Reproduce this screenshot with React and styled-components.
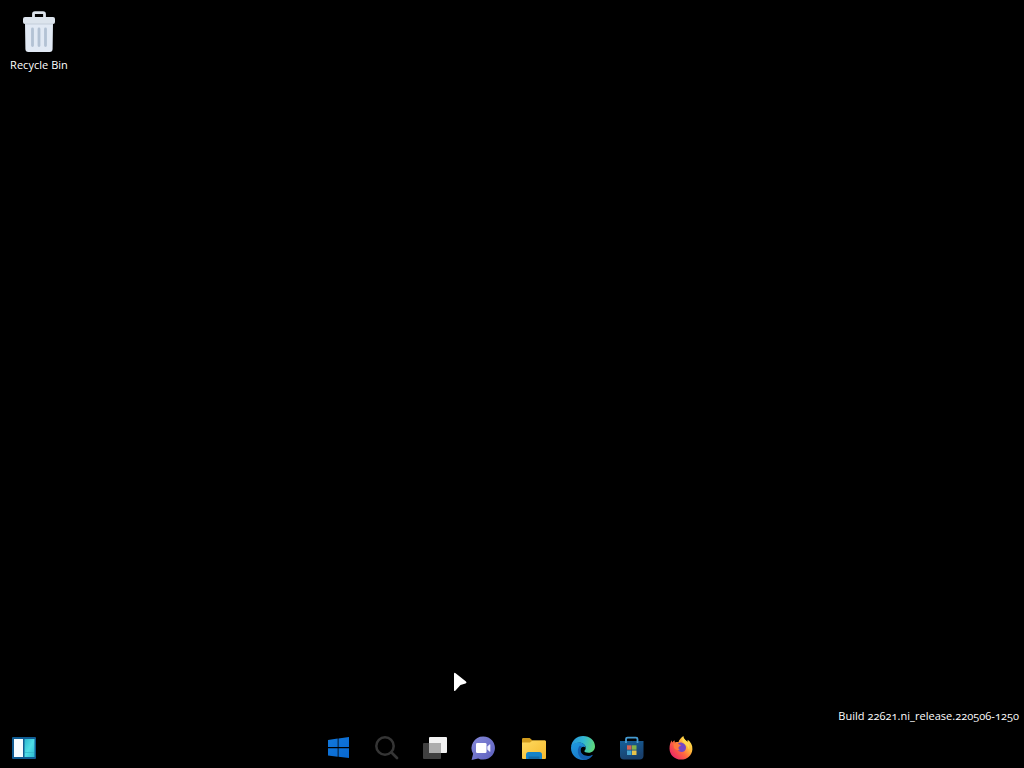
import React from "react";
import styled, { createGlobalStyle } from "styled-components";

const GlobalStyle = createGlobalStyle`
  body {
    margin: 0;
    background: #000;
    overflow: hidden;
  }
`;

const Desktop = styled.div`
  position: relative;
  display: flex;
  flex-direction: column;
  width: 100%;
  height: 100vh;
  background: #000;
  color: #fff;
  font-family: "Open Sans", "Noto Sans", sans-serif;
  font-size: 11px;
  cursor: default;

  svg {
    display: block;
    flex-shrink: 0;
  }
`;

const IconGrid = styled.main`
  flex: 1;
  display: flex;
  flex-direction: column;
  align-items: flex-start;
  padding: 10px 0 0 2px;
`;

const Shortcut = styled.div`
  display: flex;
  flex-direction: column;
  align-items: center;
  gap: 4px;
  width: 74px;
`;

const Label = styled.span`
  line-height: 16px;
  letter-spacing: ${(props) => props.$spacing || "0.03px"};
  white-space: nowrap;
`;

const BuildInfo = styled.div`
  display: flex;
  justify-content: flex-end;
  padding: 0 5px 4px 0;
  font-variant-numeric: oldstyle-nums;
`;

const Taskbar = styled.footer`
  display: flex;
  align-items: center;
  height: 40px;
  padding-left: 12px;
  box-sizing: border-box;
`;

const IconGroup = styled.div`
  display: flex;
  align-items: center;
  gap: ${(props) => props.$gap}px;
  margin-left: ${(props) => props.$offset || 0}px;
`;

const Pointer = styled.div`
  position: absolute;
  left: 452px;
  top: 671px;
`;

const Icon = ({ children }) => (
  <svg width="24" height="24" viewBox="0 0 24 24">{children}</svg>
);

const RecycleBin = () => (
  <svg width="34" height="43" viewBox="0 0 34 43">
    <path d="M11.500 8V4Q11.500 2.700 13 2.700h8Q22.500 2.700 22.500 4V8" fill="none" stroke="#dce3eb" strokeWidth="2.800" />
    <path d="M3 13h28l-.4 26q0 3-3 3H6.400q-3 0-3-3z" fill="#e1e9f4" />
    <rect x="1" y="7" width="32" height="7" rx="2" fill="#dce4ed" />
    <path d="M3 14h28" stroke="#c4ced9" strokeWidth="1" />
    <path d="M10.500 19v16.500M17 19v16.500M23.500 19v16.500" stroke="#b3c2d4" strokeWidth="2.800" strokeLinecap="round" />
  </svg>
);

const WidgetsIcon = () => (
  <Icon>
    <defs>
      <linearGradient id="widgetCyan" x1="0" y1="0" x2="1" y2="1">
        <stop offset="0" stopColor="#29b7d0" />
        <stop offset="0.5" stopColor="#4edde6" />
        <stop offset="1" stopColor="#2cbcd2" />
      </linearGradient>
    </defs>
    <rect x="0" y="1" width="24" height="22" rx="1" fill="#105c93" />
    <rect x="2" y="3" width="9" height="18" fill="#f5fcff" />
    <rect x="12.500" y="3" width="10" height="18" fill="url(#widgetCyan)" />
    <path d="M13 16.500h9" stroke="#35b9cc" strokeWidth="0.800" />
  </Icon>
);

const StartIcon = () => (
  <Icon>
    <defs>
      <linearGradient id="startBlue" x1="0" y1="0" x2="1" y2="1">
        <stop offset="0" stopColor="#1278db" />
        <stop offset="1" stopColor="#0868d2" />
      </linearGradient>
    </defs>
    <path d="M1 4l9.700-1.400v8.500H1zM11.500 2.400L22 1v10.100H11.500zM1 12.200h9.700v8.500L1 19.400zM11.500 12.200H22V22l-10.500-1.300z" fill="url(#startBlue)" />
  </Icon>
);

const SearchIcon = () => (
  <Icon>
    <circle cx="10" cy="10" r="8.700" fill="none" stroke="#353535" strokeWidth="2.500" />
    <path d="M16.500 16.500l5.500 5.500" stroke="#353535" strokeWidth="2.700" strokeLinecap="round" />
  </Icon>
);

const TaskViewIcon = () => (
  <Icon>
    <rect x="0" y="7" width="18" height="16" rx="1" fill="#404040" />
    <rect x="6" y="1" width="18" height="16" rx="1" fill="#f2f2f2" />
    <path d="M6 7h12v10H6z" fill="#adadad" />
  </Icon>
);

const ChatIcon = () => (
  <Icon>
    <defs>
      <linearGradient id="chatPurple" x1="0" y1="0" x2="1" y2="1">
        <stop offset="0" stopColor="#8589d8" />
        <stop offset="1" stopColor="#5c5fbe" />
      </linearGradient>
    </defs>
    <path d="M12.300.4a11.600 11.600 0 1 1-5.100 22L.6 24l1.500-6.200A11.600 11.600 0 0 1 12.300.4z" fill="url(#chatPurple)" />
    <rect x="5" y="7" width="10.500" height="10" rx="1.300" fill="#fff" />
    <path d="M16.300 10.500l2.200-2q.8-.6.8.4v6.300q0 1-.8.4l-2.200-2z" fill="#f0f0ff" />
  </Icon>
);

const FolderIcon = () => (
  <Icon>
    <defs>
      <linearGradient id="folderYellow" x1="0" y1="0" x2="1" y2="1">
        <stop offset="0" stopColor="#ffda60" />
        <stop offset="1" stopColor="#f5b92d" />
      </linearGradient>
    </defs>
    <path d="M0 3.200Q0 2 1.200 2h6.500L10.500 4.500H23v6H0z" fill="#d19b1d" />
    <path d="M0 6.500h8l2.500-2H23q1 0 1 1V22q0 1-1 1H1q-1 0-1-1z" fill="url(#folderYellow)" />
    <path d="M4 23v-4.300Q4 16 6.700 16h10.600q2.700 0 2.700 2.700V23z" fill="#1482c8" />
    <path d="M6.500 20.500h11V23h-11z" fill="#1268a5" />
  </Icon>
);

const EdgeIcon = () => (
  <Icon>
    <defs>
      <linearGradient id="edgeTop" x1="0" y1="0.3" x2="1" y2="0.5">
        <stop offset="0" stopColor="#2796dc" />
        <stop offset="0.5" stopColor="#32b8d2" />
        <stop offset="1" stopColor="#5fd87a" />
      </linearGradient>
      <linearGradient id="edgeBody" x1="0" y1="0" x2="0.7" y2="1">
        <stop offset="0" stopColor="#1f9be0" />
        <stop offset="1" stopColor="#1873c5" />
      </linearGradient>
    </defs>
    <path d="M0 11C.7 4.600 5.600 0 12 0c6.900 0 12 4.600 12 10.300 0 3.900-2.800 6.500-6.500 6.500-2.700 0-4.300-.9-4.300-1.700 0-.7 1.500-1 1.500-3.200 0-3.200-2.900-5.200-6.500-5.200C4.500 6.700 1.500 8.400 0 11z" fill="url(#edgeTop)" />
    <path d="M0 12c0-3.500 3.800-5.600 7.700-5.600 4 0 6.800 2 6.800 5.400-1.200-1.700-5.200-1.300-5.200 2.600 0 4.400 5.400 7.300 10 5.600l2.500-1.100C19.600 22 16.100 24 12 24 5.400 24 0 18.700 0 12z" fill="url(#edgeBody)" />
    <path d="M8.700 9.800c-4.100 5.400-.9 12.300 4.600 14.100 3.700-.2 6.700-2.200 8.700-5.200-4.600 2.500-11.200 1.100-12.300-3.400-.4-1.900.2-3.700 1.400-4.600z" fill="#145fae" />
  </Icon>
);

const StoreIcon = () => (
  <Icon>
    <defs>
      <linearGradient id="storeBag" x1="0" y1="0" x2="0.4" y2="1">
        <stop offset="0" stopColor="#16609a" />
        <stop offset="1" stopColor="#193f6b" />
      </linearGradient>
    </defs>
    <path d="M0 5h23.500v14.500q0 4-4 4H4q-4 0-4-4z" fill="url(#storeBag)" />
    <path d="M6 7V3Q6 1.700 7.500 1.700h8.500q1.500 0 1.500 1.300v4" fill="none" stroke="#459bd2" strokeWidth="1.800" />
    <path d="M7 9.300h4.500v4.400H7z" fill="#d66455" />
    <path d="M12 9.300h4.500v4.400H12z" fill="#83b348" />
    <path d="M7 14.500h4.500V19H7z" fill="#46a3cf" />
    <path d="M12 14.500h4.500V19H12z" fill="#e8c34a" />
  </Icon>
);

const FirefoxIcon = () => (
  <Icon>
    <defs>
      <linearGradient id="firefoxFlame" x1="0.9" y1="0.15" x2="0.15" y2="0.85">
        <stop offset="0" stopColor="#ffe650" />
        <stop offset="0.32" stopColor="#ffb53a" />
        <stop offset="0.6" stopColor="#ff673f" />
        <stop offset="1" stopColor="#ed2b64" />
      </linearGradient>
    </defs>
    <path d="M2.700 4.200l.4 2.300 2.300-2.300.5 2.400c1.200-.5 2.300-.6 3.500-.4C10.300 3.500 12.200 1.500 14.300 0c-.2 2.800 2.500 4 4.200 6.100l.2-2.300c2.900 2.200 5 5.400 4.700 9.400C23 19.300 18.200 23.600 12 23.600S.6 18.800.5 12.700C.5 9.300 1.300 6.600 2.700 4.200z" fill="url(#firefoxFlame)" />
    <path d="M8.500 8.800c.7-2 2.800-2.800 5-1.800 2.300.9 3.700 2.900 3.500 5.100-.3 2.700-2.300 4.200-4.700 4-2.500-.2-4.400-2.100-4.400-4.500z" fill="#7547c5" />
    <path d="M4.500 8c2.300-1.200 4.300-.9 5.700.5l1.800.6c-.5 1.200-2.100 1.300-2.500 2.400-.2 1.200.5 2.100 1.700 2.600-2.600.6-5.300-.3-6.400-2.500z" fill="#ff7a3b" />
    <path d="M14.300 0c-.2 2.800 2.500 4 4.200 6.100 1.500 2 2.300 4.800 1.600 7.700-.7-3.500-3-4.700-4.800-6.400-2.100-1.800-2.700-4.300-1-7.400z" fill="#ffd94c" />
  </Icon>
);

const App = () => (
  <>
    <GlobalStyle />
    <Desktop>
      <IconGrid>
        <Shortcut>
          <RecycleBin />
          <Label>Recycle Bin</Label>
        </Shortcut>
      </IconGrid>
      <BuildInfo>
        <Label>Build 22621.ni_release.220506-1250</Label>
      </BuildInfo>
      <Taskbar>
        <WidgetsIcon />
        <IconGroup $gap={24} $offset={291}>
          <StartIcon />
          <SearchIcon />
          <TaskViewIcon />
          <ChatIcon />
        </IconGroup>
        <IconGroup $gap={25} $offset={27}>
          <FolderIcon />
          <EdgeIcon />
          <StoreIcon />
          <FirefoxIcon />
        </IconGroup>
      </Taskbar>
      <Pointer>
        <svg width="18" height="22" viewBox="0 0 18 22">
          <path d="M2 3q0-2 1.600-.8L14 10.500q1.300 1.500-.5 1.900L8.500 14l-5 5.500Q2 20.800 2 18.800z" fill="#fff" />
        </svg>
      </Pointer>
    </Desktop>
  </>
);

export default App;
